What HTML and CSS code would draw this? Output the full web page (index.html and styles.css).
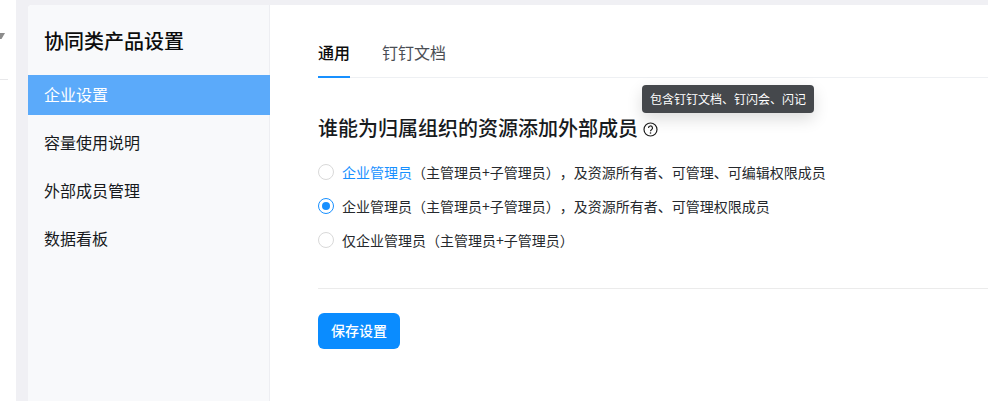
FILE: index.html
```html
<!DOCTYPE html>
<html lang="zh-CN">
<head>
<meta charset="utf-8">
<title>协同类产品设置</title>
<link rel="stylesheet" href="styles.css">
</head>
<body>
<div class="page">
  <div class="left-strip">
    <svg class="caret" width="5" height="6" viewBox="0 0 5 6"><path d="M0 0 H5 L1.5 6 H0 Z" fill="#8c8c8c"/></svg>
    <div class="strip-line"></div>
  </div>
  <div class="gutter">
    <div class="shell">
      <aside class="side">
        <h1 class="side-title">协同类产品设置</h1>
        <nav class="menu">
          <div class="menu-item active">企业设置</div>
          <div class="menu-item">容量使用说明</div>
          <div class="menu-item">外部成员管理</div>
          <div class="menu-item">数据看板</div>
        </nav>
      </aside>
      <main class="main">
        <div class="tabs">
          <div class="tab current">通用</div>
          <div class="tab">钉钉文档</div>
        </div>
        <h2 class="heading">谁能为归属组织的资源添加外部成员
          <svg class="help" width="15" height="15" viewBox="0 0 15 15" fill="none" stroke="#1f1f1f">
            <circle cx="7.5" cy="7.5" r="6.5" stroke-width="1.2"/>
            <path d="M5.5 6a2 2 0 1 1 3 1.7c-.6.4-1 .7-1 1.5" stroke-width="1.2"/>
            <circle cx="7.5" cy="11" r=".8" fill="#1f1f1f" stroke="none"/>
          </svg>
        </h2>
        <div class="options">
          <label class="option"><span class="radio"></span><span><span class="link">企业管理员</span>（主管理员+子管理员），及资源所有者、可管理、可编辑权限成员</span></label>
          <label class="option"><span class="radio on"></span><span>企业管理员（主管理员+子管理员），及资源所有者、可管理权限成员</span></label>
          <label class="option"><span class="radio"></span><span>仅企业管理员（主管理员+子管理员）</span></label>
        </div>
        <div class="divider"></div>
        <button class="save" type="button">保存设置</button>
        <div class="tooltip">包含钉钉文档、钉闪会、闪记</div>
      </main>
    </div>
  </div>
</div>
</body>
</html>
```
FILE: styles.css
```css
* { box-sizing: border-box; }
html, body { margin: 0; height: 100%; overflow: hidden; background: #fff; }
body { font-family: "Noto Sans CJK SC", "Inter", sans-serif; color: #171a1d; text-spacing-trim: space-all; }
.page { display: flex; width: 988px; height: 401px; }
.left-strip { width: 16px; flex: none; background: #fff; padding-top: 33px; overflow: hidden; }
.caret { display: block; }
.strip-line { height: 1px; width: 8px; background: #e8e8ea; margin-top: 40px; }
.gutter { flex: 1; background: #f0f0f4; padding: 5px 0 0 12px; }
.shell { display: flex; height: 396px; background: #fff; border-radius: 4px 0 0 0; overflow: hidden; }
.side { width: 242px; flex: none; background: #f8f9fb; border-right: 1px solid #edeef2; }
.side-title { margin: 0; height: 70px; padding: 20px 0 0 16px; font-size: 20px; line-height: 32px; font-weight: 500; color: #0c0c0c; }
.menu { display: flex; flex-direction: column; }
.menu-item { height: 40px; margin-bottom: 8px; padding-left: 16px; font-size: 16px; line-height: 38px; color: #171a1d; }
.menu-item.active { background: #5baafa; color: #fff; margin-right: -1px; }
.main { position: relative; flex: 1; padding: 0 0 0 48px; }
.tabs { display: flex; gap: 32px; height: 73px; border-bottom: 1px solid #eef0f3; padding-top: 28px; }
.tab { height: 45px; font-size: 16px; line-height: 39px; color: #4a4e54; }
.tab.current { color: #0c0c0c; font-weight: 500; border-bottom: 2px solid #1890ff; }
.heading { margin: 0; padding-top: 35px; height: 83px; font-size: 20px; line-height: 30px; font-weight: 500; color: #171a1d; display: flex; align-items: flex-start; gap: 5px; }
.help { margin-top: 9px; }
.options { display: flex; flex-direction: column; gap: 12px; }
.option { display: flex; align-items: center; gap: 8px; height: 22px; font-size: 14px; line-height: 22px; color: #26292d; }
.radio { width: 16px; height: 16px; border-radius: 50%; border: 1px solid #d9d9d9; background: #fff; flex: none; }
.radio.on { border-color: #1890ff; display: flex; align-items: center; justify-content: center; }
.radio.on::after { content: ""; width: 8px; height: 8px; border-radius: 50%; background: #1890ff; }
.link { color: #1890ff; }
.divider { height: 1px; background: #ebebeb; margin-top: 37px; }
.save { display: block; margin-top: 24px; width: 82px; height: 36px; border: 0; border-radius: 6px; background: #0a8cff; color: #fff; font: 500 14px/34px "Noto Sans CJK SC", sans-serif; padding: 0 0 2px; }
.tooltip { position: absolute; left: 372px; top: 80px; height: 28px; padding: 0 8px; font-size: 12px; line-height: 27px; color: #fff; background: #45484c; border-radius: 4px; box-shadow: 0 6px 16px rgba(0,0,0,.14); white-space: nowrap; }
```
